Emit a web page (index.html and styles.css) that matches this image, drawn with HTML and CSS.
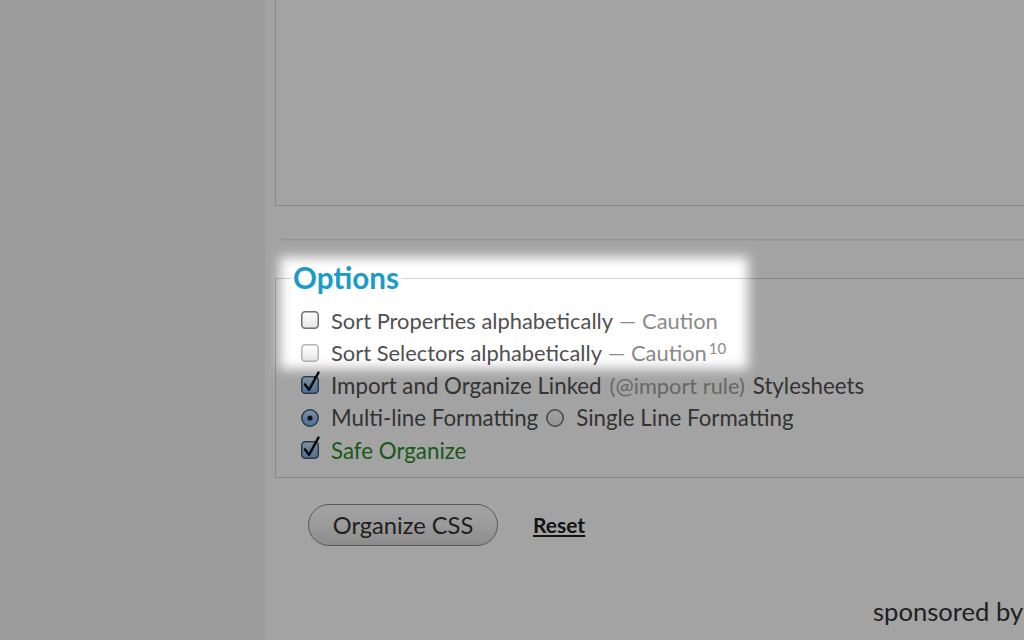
FILE: index.html
```html
<!DOCTYPE html>
<html>
<head>
<meta charset="utf-8">
<title>Options</title>
<link rel="stylesheet" href="styles.css">
</head>
<body>
<svg class="defs" width="0" height="0" aria-hidden="true">
  <defs>
    <linearGradient id="gWhite" x1="0" y1="0" x2="0" y2="1">
      <stop offset="0" stop-color="#ffffff"/>
      <stop offset="1" stop-color="#e6e6e6"/>
    </linearGradient>
    <linearGradient id="gBlue" x1="0" y1="0" x2="0" y2="1">
      <stop offset="0" stop-color="#d2e6fa"/>
      <stop offset="0.5" stop-color="#9cc4ee"/>
      <stop offset="1" stop-color="#7fb0e6"/>
    </linearGradient>
  </defs>
</svg>
<div class="page">
  <aside class="side"></aside>
  <main class="main">
    <div class="editor"></div>
    <div class="divider"></div>
    <fieldset class="options">
      <legend>Options</legend>
      <div class="row">
        <svg class="ctl" viewBox="0 0 18 18"><rect x="0.75" y="0.75" width="16.5" height="16.5" rx="3.5" fill="url(#gWhite)" stroke="#6e6e6e" stroke-width="1.5"/></svg>
        <span class="label first">Sort Properties alphabetically</span>
        <span class="note">— Caution</span>
      </div>
      <div class="row">
        <svg class="ctl" viewBox="0 0 18 18"><rect x="0.75" y="0.75" width="16.5" height="16.5" rx="3.5" fill="url(#gWhite)" stroke="#b4b4b4" stroke-width="1.5"/></svg>
        <span class="label first">Sort Selectors alphabetically</span>
        <span class="note">— Caution<sup class="ref">10</sup></span>
      </div>
      <div class="row">
        <svg class="ctl" viewBox="0 0 18 18"><rect x="0.75" y="0.75" width="16.5" height="16.5" rx="3.5" fill="url(#gBlue)" stroke="#3c5a7c" stroke-width="1.5"/><path d="M4 8.4 L8 13.8 L17.5 -3.5" fill="none" stroke="#111" stroke-width="2.5" stroke-linecap="round" stroke-linejoin="round"/></svg>
        <span class="label">Import and Organize Linked</span>
        <span class="hint">(@import rule)</span>
        <span class="label tail">Stylesheets</span>
      </div>
      <div class="row">
        <svg class="ctl" viewBox="0 0 18 18"><circle cx="9" cy="9" r="8.2" fill="url(#gBlue)" stroke="#3c5a7c" stroke-width="1.5"/><circle cx="9" cy="9" r="2.6" fill="#15202c"/></svg>
        <span class="label">Multi-line Formatting</span>
        <svg class="ctl radio2" viewBox="0 0 18 18"><circle cx="9" cy="9" r="8.2" fill="url(#gWhite)" stroke="#6e6e6e" stroke-width="1.5"/></svg>
        <span class="label">Single Line Formatting</span>
      </div>
      <div class="row">
        <svg class="ctl" viewBox="0 0 18 18"><rect x="0.75" y="0.75" width="16.5" height="16.5" rx="3.5" fill="url(#gBlue)" stroke="#3c5a7c" stroke-width="1.5"/><path d="M4 8.4 L8 13.8 L17.5 -3.5" fill="none" stroke="#111" stroke-width="2.5" stroke-linecap="round" stroke-linejoin="round"/></svg>
        <span class="label safe">Safe Organize</span>
      </div>
    </fieldset>
    <div class="actions">
      <button class="btn" type="button">Organize CSS</button>
      <a class="reset" href="#">Reset</a>
    </div>
    <div class="sponsor">sponsored by</div>
  </main>
</div>
<div class="spot"></div>
</body>
</html>
```
FILE: styles.css
```css
html, body {
  margin: 0;
  height: 100%;
  overflow: hidden;
}
body {
  background: #ffffff;
  font-family: Lato, "Open Sans", sans-serif;
  color: #505050;
}
.defs {
  position: absolute;
}
.page {
  display: flex;
  width: 1400px;
  height: 640px;
}
.side {
  width: 265px;
  flex-shrink: 0;
  background: #f4f4f4;
}
.main {
  flex: 1;
  padding-left: 10px;
}
.editor {
  height: 206px;
  box-sizing: border-box;
  border-left: 1px solid #d6d6d6;
  border-bottom: 1px solid #d6d6d6;
}
.divider {
  height: 2px;
  margin-top: 33px;
  margin-left: 6px;
  background: linear-gradient(#e6e6e6, #f8f8f8);
}
.options {
  margin: 22px 0 0 0;
  padding: 11px 0 10px 25px;
  border: 1px solid #d4d4d4;
  border-right: none;
}
.options legend {
  margin-left: -10px;
  padding: 0 2px;
  font-size: 29.6px;
  line-height: 30px;
  font-weight: 700;
  color: #1b9bc9;
}
.row {
  display: flex;
  align-items: center;
  height: 32.5px;
  font-size: 22.3px;
  white-space: nowrap;
}
.first {
  font-size: 21.9px;
}
.ctl {
  width: 18px;
  height: 18px;
  flex-shrink: 0;
  overflow: visible;
  margin-right: 12px;
}
.radio2 {
  margin-left: 8px;
}
.note {
  margin-left: 6px;
  font-size: 21.9px;
  color: #8a8a8a;
}
.ref {
  font-size: 15px;
  margin-left: 2px;
  vertical-align: 7px;
  line-height: 0;
}
.hint {
  margin-left: 8px;
  font-size: 21.8px;
  color: #a2a2a2;
}
.tail {
  margin-left: 8px;
}
.safe {
  color: #2a8a2a;
}
.actions {
  display: flex;
  align-items: center;
  margin-top: 26px;
  padding-left: 33px;
}
.btn {
  width: 190px;
  height: 42px;
  border-radius: 21px;
  border: 1px solid #8c8c8c;
  background: linear-gradient(#ffffff, #f4f4f4 45%, #dcdcdc);
  box-shadow: inset 0 1px 0 #ffffff;
  font-family: inherit;
  font-size: 23.7px;
  color: #333333;
  padding: 0;
}
.reset {
  margin-left: 35px;
  font-size: 21px;
  font-weight: 700;
  color: #1e1e1e;
  text-decoration: underline;
}
.sponsor {
  margin-top: 50px;
  padding-left: 598px;
  font-size: 25.6px;
  line-height: 30px;
  color: #333333;
  white-space: nowrap;
}
.spot {
  position: absolute;
  left: 280px;
  top: 257px;
  width: 468px;
  height: 112px;
  box-shadow: 0 0 0 3000px rgba(0, 0, 0, 0.36);
  filter: blur(6px);
  pointer-events: none;
}
```
